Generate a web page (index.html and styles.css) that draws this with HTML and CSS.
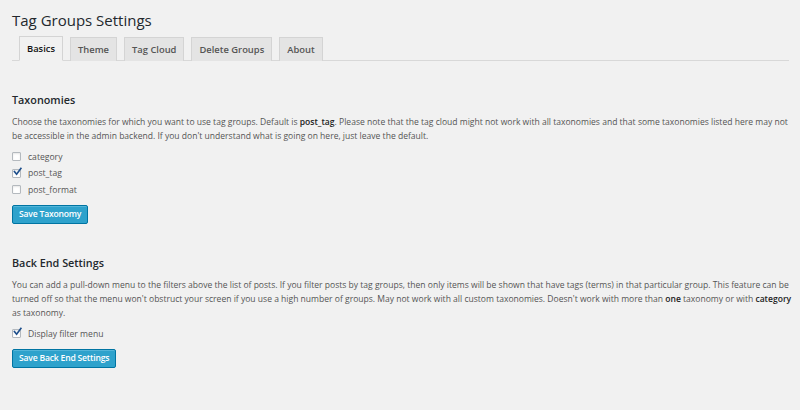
FILE: index.html
```html
<!DOCTYPE html>
<html lang="en">
<head>
<meta charset="utf-8">
<title>Tag Groups Settings</title>
<link rel="stylesheet" href="styles.css">
</head>
<body>
<div class="wrap">
  <h2 class="title">Tag Groups Settings</h2>
  <nav class="tabs">
    <span class="tab active">Basics</span>
    <span class="tab">Theme</span>
    <span class="tab">Tag Cloud</span>
    <span class="tab">Delete Groups</span>
    <span class="tab">About</span>
  </nav>

  <section class="section first">
    <h3 class="heading">Taxonomies</h3>
    <p class="desc">Choose the taxonomies for which you want to use tag groups. Default is <b>post_tag</b>. Please note that the tag cloud might not work with all taxonomies and that some taxonomies listed here may not be accessible in the admin backend. If you don't understand what is going on here, just leave the default.</p>
    <ul class="checks">
      <li class="check"><span class="box"></span><span>category</span></li>
      <li class="check"><span class="box checked"><svg viewBox="0 0 10 10"><path d="M1.6 4.6 L4 7.4 L8.8 0.9" /></svg></span><span>post_tag</span></li>
      <li class="check"><span class="box"></span><span>post_format</span></li>
    </ul>
    <button class="btn">Save Taxonomy</button>
  </section>

  <section class="section second">
    <h3 class="heading">Back End Settings</h3>
    <p class="desc">You can add a pull-down menu to the filters above the list of posts. If you filter posts by tag groups, then only items will be shown that have tags (terms) in that particular group. This feature can be turned off so that the menu won't obstruct your screen if you use a high number of groups. May not work with all custom taxonomies. Doesn't work with more than <b>one</b> taxonomy or with <b>category</b> as taxonomy.</p>
    <ul class="checks">
      <li class="check"><span class="box checked"><svg viewBox="0 0 10 10"><path d="M1.6 4.6 L4 7.4 L8.8 0.9" /></svg></span><span>Display filter menu</span></li>
    </ul>
    <button class="btn">Save Back End Settings</button>
  </section>
</div>
</body>
</html>
```

FILE: styles.css
```css
html, body {
  margin: 0;
  padding: 0;
  background: #f1f1f1;
}
body {
  font-family: "Open Sans", "Noto Sans", sans-serif;
  color: #444;
  width: 800px;
  height: 410px;
  overflow: hidden;
}
.wrap {
  padding: 10px 11px 0 12px;
}
.title {
  margin: 0;
  font-size: 15px;
  font-weight: 400;
  line-height: 20px;
  color: #23282d;
}
.tabs {
  display: flex;
  gap: 7px;
  margin-top: 6px;
  padding-left: 7px;
  border-bottom: 1px solid #d8d8d8;
  height: 24px;
  align-items: flex-end;
}
.tab {
  box-sizing: border-box;
  height: 24px;
  padding: 0 7px;
  line-height: 23px;
  font-size: 9.4px;
  font-weight: 600;
  color: #555;
  background: #e4e4e4;
  border: 1px solid #d4d4d4;
  border-bottom: none;
  margin-bottom: -1px;
}
.tab.active {
  background: #f1f1f1;
  color: #111;
  height: 25px;
  border-bottom: 1px solid #f1f1f1;
}
.section.first {
  margin-top: 32px;
}
.section.second {
  margin-top: 32px;
}
.heading {
  margin: 0;
  font-size: 10.8px;
  font-weight: 600;
  line-height: 14px;
  color: #23282d;
}
.desc {
  margin: 9px -6px 0 0;
  font-size: 8.55px;
  line-height: 13.8px;
  color: #555;
}
.desc b {
  font-weight: 600;
  color: #222;
}
.checks {
  list-style: none;
  margin: 5px 0 0 0;
  padding: 0;
}
.check {
  display: flex;
  align-items: center;
  gap: 7px;
  height: 16.5px;
  font-size: 8.6px;
  color: #555;
}
.box {
  box-sizing: border-box;
  width: 9px;
  height: 9px;
  border: 1px solid #b4b9be;
  border-radius: 1px;
  background: #fff;
  box-shadow: inset 0 1px 2px rgba(0,0,0,0.1);
  position: relative;
  flex: none;
}
.box svg {
  position: absolute;
  left: 0;
  top: -3px;
  width: 9px;
  height: 10px;
  overflow: visible;
}
.box svg path {
  fill: none;
  stroke: #1e4f8c;
  stroke-width: 1.8;
  stroke-linecap: square;
}
.btn {
  display: block;
  margin-top: 7px;
  height: 19px;
  padding: 0 6px;
  font-family: inherit;
  font-size: 8.6px;
  font-weight: 600;
  color: #fff;
  background: #2ea2cc;
  border: 1px solid #0074a2;
  border-radius: 2px;
  box-shadow: inset 0 1px 0 rgba(120,200,230,0.5);
  line-height: 17px;
  letter-spacing: -0.2px;
}
```
